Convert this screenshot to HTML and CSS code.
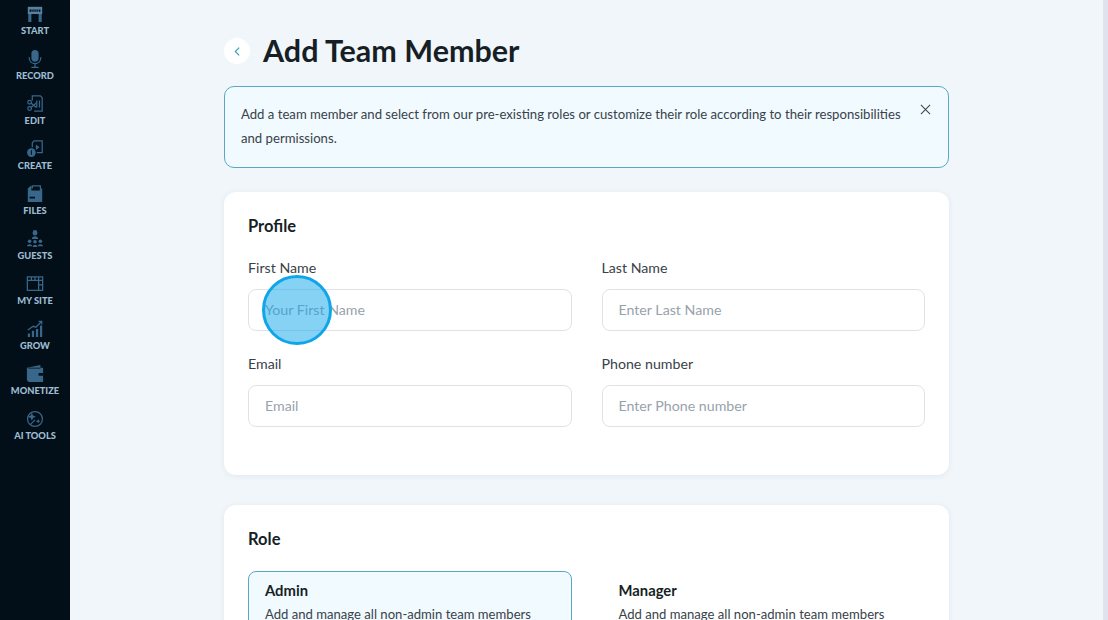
FILE: index.html
```html
<!DOCTYPE html>
<html lang="en">
<head>
<meta charset="utf-8">
<title>Add Team Member</title>
<link rel="stylesheet" href="styles.css">
</head>
<body>
<div class="app">
  <nav class="sidebar">
    <a class="nav-item">
      <svg class="nav-icon" viewBox="0 0 20 20"><path class="fill" d="M2.500 3h15v16h-3.500v-9h-8v9H2.500z"/><path class="sign" d="M2 2h16v8H2z"/><path class="cut" d="M4 5h2.200v2.500H4zM7 5h1.500v2.500H7zM9.300 5h1.500v2.500H9.300zM11.600 5h1.500v2.500h-1.500zM14 5h2v2.500h-2z"/></svg>
      <span>START</span>
    </a>
    <a class="nav-item">
      <svg class="nav-icon" viewBox="0 0 20 20"><rect class="fill" x="6" y="0" width="8" height="13" rx="4"/><path class="line" d="M3.500 8c0 9.500 13 9.500 13 0M10 15v4M6 19.300h8"/></svg>
      <span>RECORD</span>
    </a>
    <a class="nav-item">
      <svg class="nav-icon" viewBox="0 0 20 20"><path class="line" d="M7 6V1h9l2 2v15H9M12 6v8M15 6v8"/><circle class="line" cx="4" cy="8" r="2"/><circle class="line" cx="4" cy="15" r="2"/><path class="line" d="M5.500 9l6 5M5.500 14l6-5"/></svg>
      <span>EDIT</span>
    </a>
    <a class="nav-item">
      <svg class="nav-icon" viewBox="0 0 20 20"><path class="line" d="M7 8V3l2-2h9v13h-6"/><path class="fill" d="M11 5l4 3-4 3z"/><circle class="fill" cx="6" cy="14" r="4.800"/><path class="cut" d="M5.400 11.500h1.200v5H5.400z"/></svg>
      <span>CREATE</span>
    </a>
    <a class="nav-item">
      <svg class="nav-icon" viewBox="0 0 20 20"><path class="line" d="M7 4V1h9v5"/><path class="fill" d="M2 4l3-3h1v5h10v-2h2v15H2z"/><path class="cut" d="M4 13h6v2H4z"/></svg>
      <span>FILES</span>
    </a>
    <a class="nav-item">
      <svg class="nav-icon" viewBox="0 0 20 20"><rect class="fill" x="7.500" y="0" width="5" height="6" rx="2.500"/><path class="fill" d="M6.500 10c0-4 7-4 7 0z"/><circle class="fill" cx="4" cy="12.500" r="2"/><circle class="fill" cx="10" cy="13" r="2"/><circle class="fill" cx="16" cy="12.500" r="2"/><path class="fill" d="M1 18c0-3 6-3 6 0zM7.500 19c0-3.500 5-3.500 5 0zM13 18c0-3 6-3 6 0z"/></svg>
      <span>GUESTS</span>
    </a>
    <a class="nav-item">
      <svg class="nav-icon" viewBox="0 0 20 20"><path class="line" d="M1.500 2h17v15h-17zM1.500 6h17M6 2v4M10 2v4M14 2v4M14 6v11M14 11h4.500"/></svg>
      <span>MY SITE</span>
    </a>
    <a class="nav-item">
      <svg class="nav-icon" viewBox="0 0 20 20"><path class="fill" d="M2 15h2.500v4H2zM6.500 12H9v7H6.500zM11 10h2.500v9H11zM15.500 6H18v13h-2.500z"/><path class="line" d="M2 11l6-4 3 1 6-6M14 1.500h3.500V5"/></svg>
      <span>GROW</span>
    </a>
    <a class="nav-item">
      <svg class="nav-icon" viewBox="0 0 20 20"><path class="fill" d="M1 3l15-3v3h3v16H3l-2-2z"/><path class="cut" d="M2 3h14v1H3zM14 9h5v3h-5z"/></svg>
      <span>MONETIZE</span>
    </a>
    <a class="nav-item">
      <svg class="nav-icon" viewBox="0 0 20 20"><circle class="line" cx="10" cy="10" r="8.300"/><path class="fill" d="M6.500 3l1.300 3.200L11 7.500 7.800 8.800 6.500 12 5.200 8.800 2 7.500l3.200-1.300zM13.500 10l.8 1.700 1.700.8-1.700.8-.8 1.700-.8-1.700-1.700-.8 1.700-.8z"/><path class="line" d="M5 16l5-5"/></svg>
      <span>AI TOOLS</span>
    </a>
  </nav>

  <main class="main">
    <div class="content">
      <header class="page-head">
        <button class="back" type="button" aria-label="Back">
          <svg viewBox="0 0 10 10" class="back-icon"><path d="M6.500 1.500L3 5l3.500 3.500"/></svg>
        </button>
        <h1>Add Team Member</h1>
      </header>

      <div class="notice">
        <p>Add a team member and select from our pre-existing roles or customize their role according to their responsibilities and permissions.</p>
        <svg viewBox="0 0 12 12" class="close-icon"><path d="M1 1l10 10M11 1L1 11"/></svg>
      </div>

      <section class="card profile">
        <h2>Profile</h2>
        <div class="form-grid">
          <label class="field"><span>First Name</span><input type="text" placeholder="Your First Name"></label>
          <label class="field"><span>Last Name</span><input type="text" placeholder="Enter Last Name"></label>
          <label class="field"><span>Email</span><input type="text" placeholder="Email"></label>
          <label class="field"><span>Phone number</span><input type="text" placeholder="Enter Phone number"></label>
        </div>
      </section>

      <section class="card role">
        <h2>Role</h2>
        <div class="role-grid">
          <div class="role-option selected">
            <h3>Admin</h3>
            <p>Add and manage all non-admin team members</p>
          </div>
          <div class="role-option">
            <h3>Manager</h3>
            <p>Add and manage all non-admin team members</p>
          </div>
        </div>
      </section>
    </div>
    <div class="click-dot"></div>
  </main>
  <div class="scrollbar"></div>
</div>
</body>
</html>
```

FILE: styles.css
```css
* { box-sizing: border-box; }
html, body { margin: 0; height: 100%; overflow: hidden; }
body { font-family: "Lato", "Noto Sans", sans-serif; color: #1a2229; background: #f1f6fa; }

.app { display: flex; height: 620px; }

.sidebar {
  width: 70px;
  flex: none;
  background: #020f19;
  display: flex;
  flex-direction: column;
  align-items: center;
  padding-top: 5px;
  gap: 13px;
}
.nav-item {
  display: flex;
  flex-direction: column;
  align-items: center;
  height: 32px;
  color: #9fbdd2;
  font-size: 9.300px;
  line-height: 12px;
  font-weight: 900;
  white-space: nowrap;
}
.nav-icon { width: 18px; height: 18px; margin-bottom: 2px; display: block; }
.fill { fill: #386789; }
.sign { fill: #57819f; }
.cut { fill: #02121d; }
.line { fill: none; stroke: #386789; stroke-width: 1.400; }

.main {
  flex: 1;
  position: relative;
  overflow: hidden;
  display: flex;
  justify-content: center;
}
.content { width: 725px; flex: none; padding-top: 35px; }

.page-head { display: flex; align-items: center; gap: 13px; height: 32px; }
.back {
  width: 26px;
  height: 26px;
  padding: 0;
  border: 0;
  border-radius: 50%;
  background: #fff;
  display: flex;
  align-items: center;
  justify-content: center;
}
.back-icon { width: 11px; height: 11px; fill: none; stroke: #2e9db5; stroke-width: 1; }
h1 { margin: 0 0 2px; font-size: 30.500px; line-height: 32px; font-weight: 700; color: #171f26; }

.notice {
  margin-top: 19px;
  height: 82px;
  background: #f1fafe;
  border: 1px solid #5aa9c4;
  border-radius: 10px;
  padding: 15px 17px 0 16px;
  display: flex;
  justify-content: space-between;
  align-items: flex-start;
  gap: 10px;
}
.notice p { margin: 0; width: 670px; font-size: 13.150px; line-height: 24px; color: #39424a; }
.close-icon { width: 11px; height: 11px; margin-top: 2px; flex: none; fill: none; stroke: #39424a; stroke-width: 1.100; }

.card {
  background: #fff;
  border-radius: 12px;
  box-shadow: 0 1px 6px rgba(40, 70, 90, .08);
  padding: 24px;
}
.profile { margin-top: 24px; height: 283px; }
.role { margin-top: 30px; height: 240px; }
h2 { margin: 0; font-size: 16.500px; line-height: 20px; font-weight: 700; color: #171f26; }

.form-grid {
  display: grid;
  grid-template-columns: 1fr 1fr;
  column-gap: 30px;
  row-gap: 23px;
  margin-top: 22px;
}
.field { display: block; }
.field span { display: block; font-size: 14.200px; line-height: 20px; color: #39424a; }
.field input {
  display: block;
  width: 100%;
  height: 42px;
  margin-top: 11px;
  padding: 0 16px 2px;
  border: 1px solid #dfe3e6;
  border-radius: 8px;
  background: #fff;
  font: inherit;
  font-size: 14.200px;
  outline: 0;
}
.field input::placeholder { color: #98a2ab; opacity: 1; }

.role-grid {
  display: grid;
  grid-template-columns: 1fr 1fr;
  column-gap: 30px;
  margin-top: 22px;
}
.role-option { padding: 9px 16px; height: 120px; border: 1px solid transparent; border-radius: 8px; }
.role-option.selected { background: #f1fafe; border-color: #5aa9c4; }
h3 { margin: 0; font-size: 14.800px; line-height: 18px; font-weight: 700; color: #171f26; }
.role-option p { margin: 6px 0 0; font-size: 13.100px; line-height: 18px; color: #39424a; white-space: nowrap; }

.click-dot {
  position: absolute;
  left: 192px;
  top: 275px;
  width: 70px;
  height: 70px;
  border-radius: 50%;
  border: 3px solid #0ea5e9;
  background: rgba(14, 165, 233, .5);
}

.scrollbar { width: 5px; flex: none; background: #e0e3ee; }
```
